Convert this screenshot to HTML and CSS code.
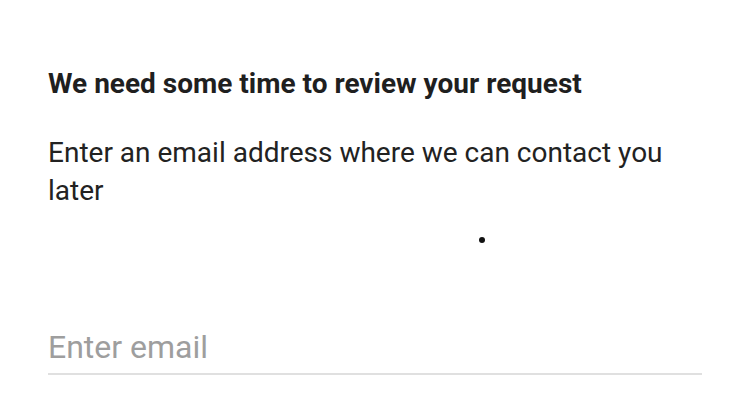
FILE: index.html
```html
<!DOCTYPE html>
<html>
<head>
<meta charset="utf-8">
<link rel="stylesheet" href="styles.css">
</head>
<body>
<main class="page">
  <h1 class="title">We need some time to review your request</h1>
  <p class="desc">Enter an email address where we can contact you later</p>
  <div class="spinner-row"><span class="dot"></span></div>
  <div class="field">
    <input class="email" type="text" placeholder="Enter email">
  </div>
</main>
</body>
</html>
```
FILE: styles.css
```css
html, body {
  margin: 0;
  padding: 0;
  background: #fff;
}
.page {
  width: 742px;
  height: 402px;
  box-sizing: border-box;
  padding: 67px 40px 0 48px;
  font-family: Roboto, "Liberation Sans", sans-serif;
  color: #212121;
  display: flex;
  flex-direction: column;
}
.title {
  margin: 0;
  font-size: 28px;
  font-weight: 700;
  line-height: 34px;
  color: #1f1f1f;
}
.desc {
  margin: 33px 0 0;
  max-width: 640px;
  font-size: 28px;
  line-height: 38px;
  font-weight: 400;
  color: #222;
}
.spinner-row {
  margin-top: 10px;
  height: 40px;
  padding-left: 431px;
  display: flex;
  align-items: center;
}
.dot {
  width: 6px;
  height: 6px;
  border-radius: 50%;
  background: #111;
}
.field {
  margin-top: 68px;
  width: 654px;
  border-bottom: 2px solid #e0e0e0;
}
.email {
  display: block;
  width: 100%;
  box-sizing: border-box;
  border: 0;
  outline: none;
  padding: 0 0 7px;
  font-family: Roboto, "Liberation Sans", sans-serif;
  font-size: 32px;
  line-height: 38px;
  height: 45px;
  color: #212121;
  background: transparent;
}
.email::placeholder {
  color: #9e9e9e;
}
```
